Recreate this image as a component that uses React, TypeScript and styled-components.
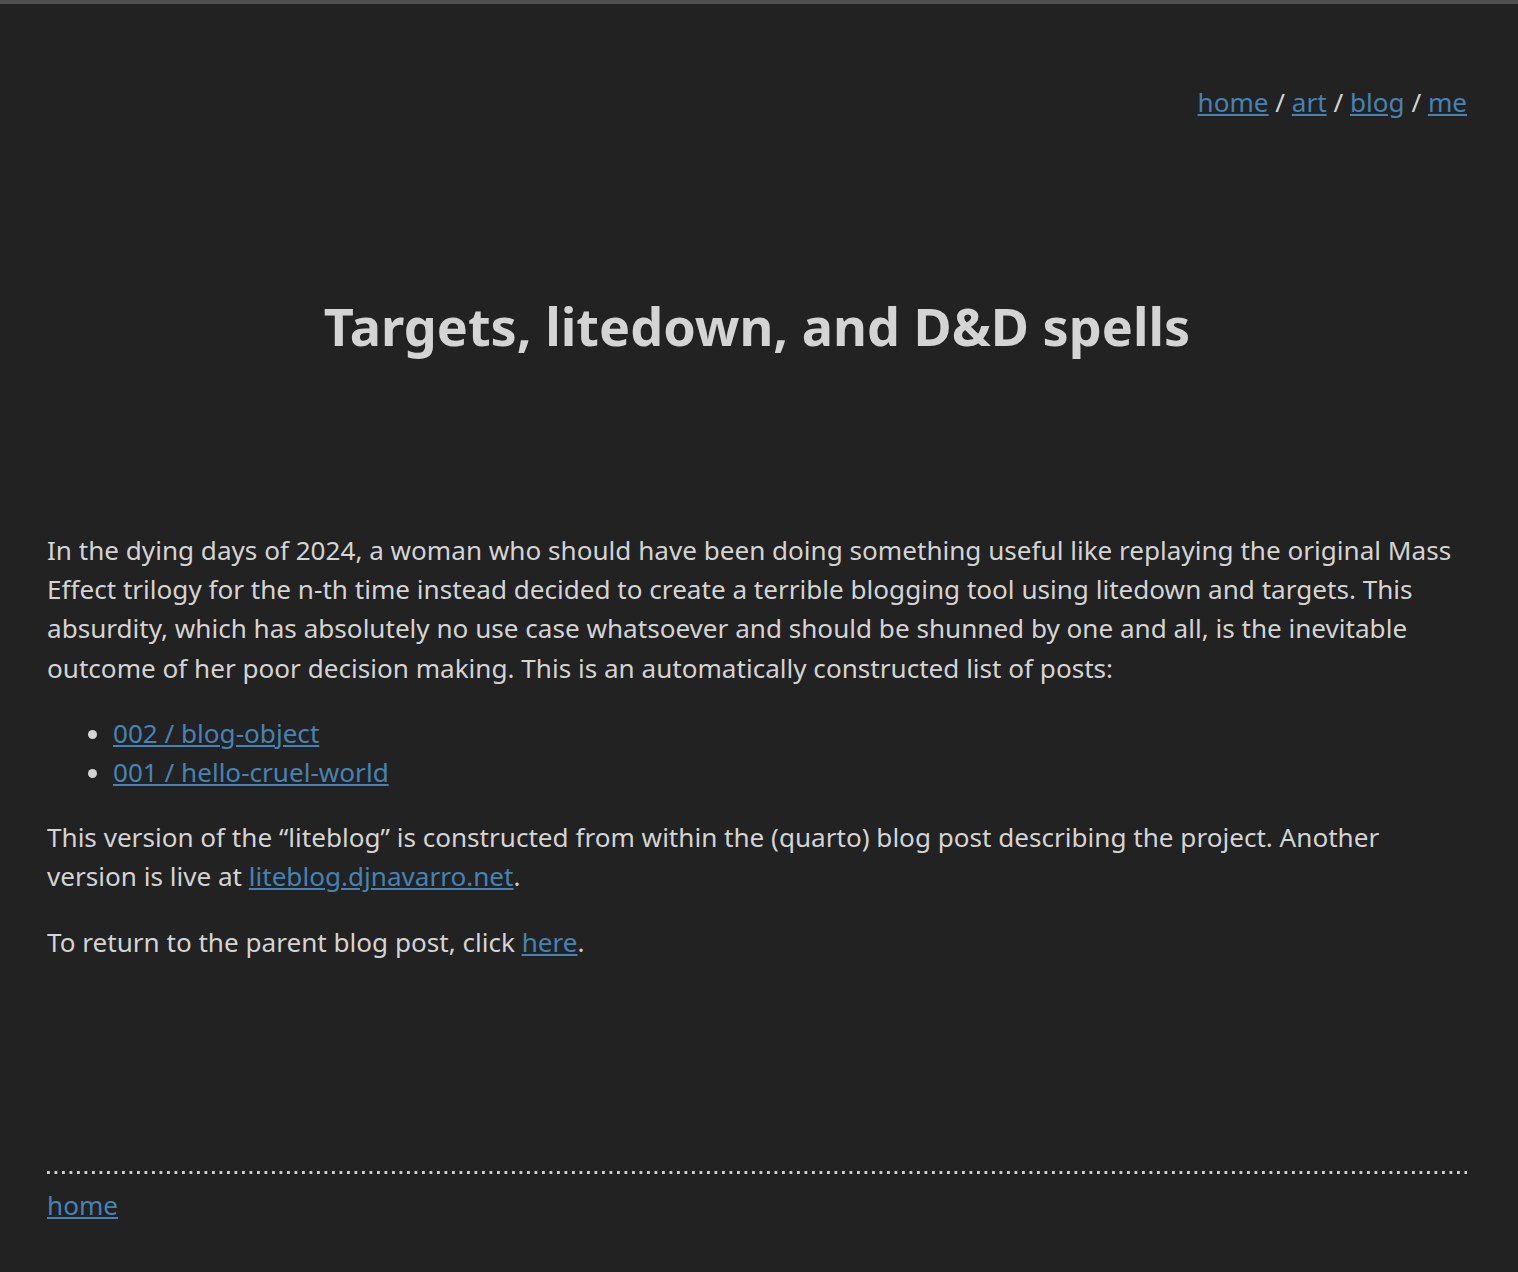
import React from "react";
import styled, { createGlobalStyle } from "styled-components";

const Global = createGlobalStyle`
  html, body { margin: 0; padding: 0; background: #222222; }
  body {
    font-family: "Noto Sans", "Open Sans", sans-serif;
    color: #d4d4d4;
    font-size: 26.1px;
    line-height: 1.5;
  }
`;

const TopBar = styled.div`
  height: 4px;
  background: #505050;
`;

const Page = styled.div`
  min-height: calc(100vh - 4px);
  box-sizing: border-box;
  padding: 0 51px 0 47px;
  display: flex;
  flex-direction: column;
`;

const Nav = styled.nav`
  text-align: right;
  padding-top: 79px;
`;

const Link = styled.a`
  color: #4682b4;
  text-decoration: underline;
`;

const Title = styled.h1`
  margin: 169px 0 0;
  text-align: center;
  font-size: 2em;
  line-height: 70px;
  font-weight: 700;
  color: #d4d4d4;
`;

const Main = styled.main`
  margin-top: 170px;
`;

const Para = styled.p`
  margin: 0 0 1em;
`;

const List = styled.ul`
  margin: 0 0 1em;
  padding-left: 66px;
`;

const Footer = styled.footer`
  margin-top: auto;
  padding-bottom: 47px;
`;

const Dots = styled.div`
  height: 3px;
  background-image: linear-gradient(to right, #cfcfcf 3px, transparent 3px);
  background-size: 7.5px 3px;
  margin-bottom: 12px;
`;

export default function App() {
  return (
    <>
      <Global />
      <TopBar />
      <Page>
        <Nav>
          <Link href="#">home</Link> / <Link href="#">art</Link> /{" "}
          <Link href="#">blog</Link> / <Link href="#">me</Link>
        </Nav>
        <Title>Targets, litedown, and D&amp;D spells</Title>
        <Main>
          <Para>
            In the dying days of 2024, a woman who should have been doing
            something useful like replaying the original Mass Effect trilogy
            for the n-th time instead decided to create a terrible blogging
            tool using litedown and targets. This absurdity, which has
            absolutely no use case whatsoever and should be shunned by one and
            all, is the inevitable outcome of her poor decision making. This is
            an automatically constructed list of posts:
          </Para>
          <List>
            <li>
              <Link href="#">002 / blog-object</Link>
            </li>
            <li>
              <Link href="#">001 / hello-cruel-world</Link>
            </li>
          </List>
          <Para>
            This version of the “liteblog” is constructed from within the
            (quarto) blog post describing the project. Another version is live
            at <Link href="#">liteblog.djnavarro.net</Link>.
          </Para>
          <Para>
            To return to the parent blog post, click{" "}
            <Link href="#">here</Link>.
          </Para>
        </Main>
        <Footer>
          <Dots />
          <Link href="#">home</Link>
        </Footer>
      </Page>
    </>
  );
}
